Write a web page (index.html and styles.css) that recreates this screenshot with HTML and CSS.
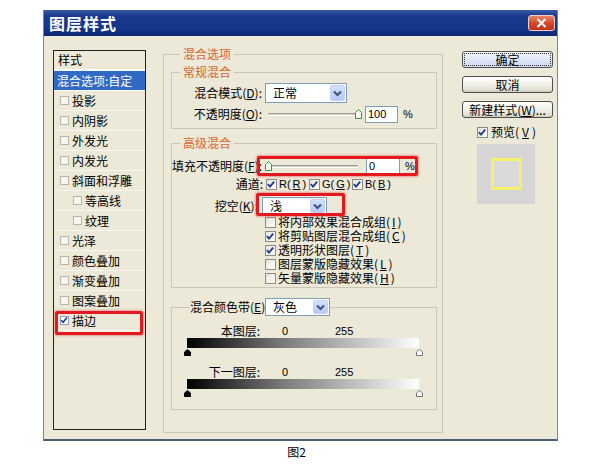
FILE: index.html
```html
<!DOCTYPE html>
<html lang="zh">
<head>
<meta charset="utf-8">
<title>图层样式</title>
<link rel="stylesheet" href="styles.css">
</head>
<body>
<div class="dialog">
  <div class="titlebar">
    <span class="title">图层样式</span>
    <span class="close"><svg width="11" height="10" viewBox="0 0 11 10"><path d="M1.5 1 L9.5 9 M9.5 1 L1.5 9" stroke="#fff" stroke-width="2" fill="none"/></svg></span>
  </div>
  <div class="content">
    <div class="styles">
      <div class="st-row st-head">样式</div>
      <div class="st-row sel">混合选项:自定</div>
      <div class="st-row"><i class="cbs"></i>投影</div>
      <div class="st-row"><i class="cbs"></i>内阴影</div>
      <div class="st-row"><i class="cbs"></i>外发光</div>
      <div class="st-row"><i class="cbs"></i>内发光</div>
      <div class="st-row"><i class="cbs"></i>斜面和浮雕</div>
      <div class="st-row sub"><i class="cbs"></i>等高线</div>
      <div class="st-row sub"><i class="cbs"></i>纹理</div>
      <div class="st-row"><i class="cbs"></i>光泽</div>
      <div class="st-row"><i class="cbs"></i>颜色叠加</div>
      <div class="st-row"><i class="cbs"></i>渐变叠加</div>
      <div class="st-row"><i class="cbs"></i>图案叠加</div>
      <div class="st-row"><i class="cbs on"><svg width="9" height="9" viewBox="0 0 9 9"><path d="M1.3 4.2 L3.5 6.6 L7.8 1.2" stroke="#1e3a8c" stroke-width="1.8" fill="none"/></svg></i>描边<span class="redbox rb-stroke"></span></div>
    </div>

    <div class="middle">
      <fieldset class="grp outer">
        <legend>混合选项</legend>
        <fieldset class="grp gen">
          <legend>常规混合</legend>
          <div class="row r-mode">
            <span class="lbl">混合模式(<u>D</u>):</span>
            <div class="select s-mode"><span>正常</span><span class="dd"><svg width="9" height="7" viewBox="0 0 9 7"><path d="M1 1.5 L4.5 5 L8 1.5" stroke="#3c5180" stroke-width="2" fill="none"/></svg></span></div>
          </div>
          <div class="row r-op">
            <span class="lbl">不透明度(<u>O</u>):</span>
            <div class="slider sl-op"><span class="track"></span><svg class="thumb" width="7" height="10" viewBox="0 0 7 10"><path d="M0.5 3.5 L3.5 0.5 L6.5 3.5 L6.5 9.5 L0.5 9.5 Z" fill="#f3fbee" stroke="#3b9a3b"/></svg></div>
            <div class="num n-op">100</div>
            <span class="pct">%</span>
          </div>
        </fieldset>

        <fieldset class="grp adv">
          <legend>高级混合</legend>
          <div class="row r-fill">
            <span class="lbl">填充不透明度(<u>F</u>):</span>
            <div class="slider sl-fill"><svg class="thumb" width="7" height="10" viewBox="0 0 7 10"><path d="M0.5 3.5 L3.5 0.5 L6.5 3.5 L6.5 9.5 L0.5 9.5 Z" fill="#f3fbee" stroke="#3b9a3b"/></svg><span class="track"></span></div>
            <div class="num n-fill">0</div>
            <span class="pct">%</span>
            <span class="redbox rb-fill"></span>
          </div>
          <div class="row r-ch">
            <span class="lbl l-ch">通道:</span>
            <span class="ch"><i class="cb"><svg width="11" height="11" viewBox="0 0 11 11"><path d="M2 5.2 L4.4 7.8 L9 2.4" stroke="#1e3a8c" stroke-width="2" fill="none"/></svg></i>R(<u>R</u>)</span>
            <span class="ch"><i class="cb"><svg width="11" height="11" viewBox="0 0 11 11"><path d="M2 5.2 L4.4 7.8 L9 2.4" stroke="#1e3a8c" stroke-width="2" fill="none"/></svg></i>G(<u>G</u>)</span>
            <span class="ch"><i class="cb"><svg width="11" height="11" viewBox="0 0 11 11"><path d="M2 5.2 L4.4 7.8 L9 2.4" stroke="#1e3a8c" stroke-width="2" fill="none"/></svg></i>B(<u>B</u>)</span>
          </div>
          <div class="row r-ko">
            <span class="lbl l-ko">挖空(<u>K</u>):</span>
            <div class="select s-ko"><span>浅</span><span class="dd"><svg width="9" height="7" viewBox="0 0 9 7"><path d="M1 1.5 L4.5 5 L8 1.5" stroke="#3c5180" stroke-width="2" fill="none"/></svg></span></div>
            <span class="redbox rb-ko"></span>
          </div>
          <div class="cks">
            <div class="ck-row"><i class="cb"></i>将内部效果混合成组(<u>I</u>)</div>
            <div class="ck-row"><i class="cb"><svg width="11" height="11" viewBox="0 0 11 11"><path d="M2 5.2 L4.4 7.8 L9 2.4" stroke="#1e3a8c" stroke-width="2" fill="none"/></svg></i>将剪贴图层混合成组(<u>C</u>)</div>
            <div class="ck-row"><i class="cb"><svg width="11" height="11" viewBox="0 0 11 11"><path d="M2 5.2 L4.4 7.8 L9 2.4" stroke="#1e3a8c" stroke-width="2" fill="none"/></svg></i>透明形状图层(<u>T</u>)</div>
            <div class="ck-row"><i class="cb"></i>图层蒙版隐藏效果(<u>L</u>)</div>
            <div class="ck-row"><i class="cb"></i>矢量蒙版隐藏效果(<u>H</u>)</div>
          </div>
        </fieldset>

        <fieldset class="grp band">
          <legend class="band-legend">
            <span class="band-lbl">混合颜色带(<u>E</u>):</span>
            <div class="select s-band"><span>灰色</span><span class="dd"><svg width="9" height="7" viewBox="0 0 9 7"><path d="M1 1.5 L4.5 5 L8 1.5" stroke="#3c5180" stroke-width="2" fill="none"/></svg></span></div>
          </legend>
          <div class="b-row">
            <span class="b-lbl">本图层:</span><span class="num b-v0">0</span><span class="num">255</span>
          </div>
          <div class="grad"></div>
          <div class="thumbs">
            <svg width="7" height="7" viewBox="0 0 7 7"><path d="M0.5 3 L3.5 0.5 L6.5 3 L6.5 6.5 L0.5 6.5 Z" fill="#000" stroke="#000"/></svg>
            <svg width="7" height="7" viewBox="0 0 7 7"><path d="M0.5 3 L3.5 0.5 L6.5 3 L6.5 6.5 L0.5 6.5 Z" fill="#fff" stroke="#777"/></svg>
          </div>
          <div class="b-row">
            <span class="b-lbl">下一图层:</span><span class="num b-v0">0</span><span class="num">255</span>
          </div>
          <div class="grad"></div>
          <div class="thumbs">
            <svg width="7" height="7" viewBox="0 0 7 7"><path d="M0.5 3 L3.5 0.5 L6.5 3 L6.5 6.5 L0.5 6.5 Z" fill="#000" stroke="#000"/></svg>
            <svg width="7" height="7" viewBox="0 0 7 7"><path d="M0.5 3 L3.5 0.5 L6.5 3 L6.5 6.5 L0.5 6.5 Z" fill="#fff" stroke="#777"/></svg>
          </div>
        </fieldset>
      </fieldset>
    </div>

    <div class="right">
      <div class="btn def">确定</div>
      <div class="btn">取消</div>
      <div class="btn">新建样式(<u>W</u>)...</div>
      <div class="pv"><i class="cb"><svg width="11" height="11" viewBox="0 0 11 11"><path d="M2 5.2 L4.4 7.8 L9 2.4" stroke="#1e3a8c" stroke-width="2" fill="none"/></svg></i>预览(<u>V</u>)</div>
      <div class="prev-box"><div class="prev-sq"></div></div>
    </div>
  </div>
</div>
<div class="caption">图2</div>
</body>
</html>
```

FILE: styles.css
```css
body {
  margin: 0;
  background: #fff;
  font-family: "Noto Sans CJK SC", "Liberation Sans", sans-serif;
  font-size: 12px;
  line-height: 14px;
  color: #000;
}

.dialog {
  margin: 10px 0 0 43px;
  width: 515px;
  height: 431px;
  box-sizing: border-box;
  background: #ece9d8;
  border: 1px solid #7c8596;
  border-top: none;
  border-bottom: 2px solid #4e5d78;
  display: flex;
  flex-direction: column;
}

.titlebar {
  height: 26px;
  flex: none;
  display: flex;
  align-items: center;
  justify-content: space-between;
  padding: 0 2px 0 5px;
  background: linear-gradient(#3b5aa6, #1a3a8e 22%, #15358b 70%, #0c2872);
}

.title {
  color: #fff;
  font-weight: bold;
  font-size: 16px;
  line-height: 20px;
  letter-spacing: 1px;
}

.close {
  width: 27px;
  height: 16px;
  box-sizing: border-box;
  border: 1px solid #f1cfc2;
  border-radius: 3px;
  background: linear-gradient(#eb8466, #d2462a 55%, #c0321a);
  display: flex;
  align-items: center;
  justify-content: center;
}

.content {
  flex: 1;
  display: flex;
  padding: 10px 0 0 9px;
  box-sizing: border-box;
}

/* left style list */
.styles {
  flex: none;
  width: 93px;
  height: 380px;
  margin-top: 4px;
  box-sizing: border-box;
  border: 1px solid #222;
  background: #ece9d8;
}

.st-row {
  position: relative;
  height: 20px;
  box-sizing: border-box;
  border-bottom: 1px solid #f7f6ef;
  display: flex;
  align-items: center;
  gap: 3px;
  padding-left: 6px;
  white-space: nowrap;
}

.st-head {
  padding-left: 4px;
  border-bottom: 2px solid #fff;
}

.st-row.sel {
  background: #316ac5;
  color: #fff;
  padding-left: 3px;
  border-bottom: 1px solid #fff;
}

.st-row.sub {
  padding-left: 19px;
}

.cbs {
  width: 9px;
  height: 9px;
  box-sizing: border-box;
  border: 1px solid #b8b6ac;
  background: #f7f6f1;
  flex: none;
  display: flex;
}

.cbs.on {
  border-color: #8f9cb8;
  background: #fff;
}

.cbs svg {
  margin: -1px 0 0 -1px;
}

.redbox {
  position: absolute;
  box-sizing: border-box;
  border: 3px solid #e3191f;
  border-radius: 2px;
  box-shadow: 0 0 2px 1px rgba(230, 60, 60, 0.45);
  pointer-events: none;
}

.rb-stroke {
  left: 1px;
  top: 0;
  width: 88px;
  height: 24px;
}

.rb-fill {
  left: 85px;
  top: 0;
  width: 161px;
  height: 20px;
}

.rb-ko {
  left: 84px;
  top: -4px;
  width: 89px;
  height: 23px;
}

/* middle */
.middle {
  flex: none;
  width: 280px;
  margin-left: 17px;
}

fieldset.grp {
  margin: 0;
  padding: 0;
  min-width: 0;
  border: 1px solid #c9c6b6;
}

legend {
  padding: 0 3px;
  margin-left: 8px;
  color: #d9652b;
  line-height: 16px;
}

.outer {
  padding: 2px 5px 22px 7px !important;
}

.outer > legend {
  margin-left: 9px;
}

.gen {
  padding-bottom: 6px !important;
}

.adv {
  margin-top: 6px !important;
  padding-bottom: 2px !important;
}

.band {
  margin-top: 10px !important;
  padding-bottom: 11px !important;
}

.row {
  position: relative;
  display: flex;
  align-items: center;
  white-space: nowrap;
}

.lbl {
  flex: none;
  width: 90px;
  text-align: right;
}

.r-mode {
  height: 20px;
  margin-top: 3px;
}

.r-op {
  height: 16px;
  margin-top: 3px;
}

.r-fill {
  height: 20px;
  margin-top: 5px;
}

.r-ch {
  height: 14px;
  margin-top: 1px;
}

.r-ko {
  height: 18px;
  margin-top: 6px;
}

.select {
  flex: none;
  box-sizing: border-box;
  border: 1px solid #7f9db9;
  background: #fff;
  display: flex;
  align-items: center;
  justify-content: space-between;
  padding: 0 1px 0 7px;
  margin-left: 3px;
}

.s-mode {
  width: 82px;
  height: 20px;
}

.s-ko {
  width: 65px;
  height: 18px;
  margin-left: 4px;
}

.s-band {
  width: 65px;
  height: 18px;
  margin-left: 3px;
}

.dd {
  width: 15px;
  height: calc(100% - 2px);
  box-sizing: border-box;
  border: 1px solid #c3d3f6;
  border-radius: 2px;
  background: linear-gradient(#d3e0fb, #b6caf5);
  display: flex;
  align-items: center;
  justify-content: center;
}

.slider {
  flex: none;
  position: relative;
  height: 10px;
  display: flex;
  align-items: center;
}

.track {
  display: block;
  width: 90px;
  height: 3px;
  box-sizing: border-box;
  border-top: 1px solid #9d9b90;
  border-bottom: 1px solid #fff;
  background: #d7d4c6;
  border-radius: 1px;
}

.sl-op {
  width: 96px;
  margin-left: 6px;
}

.sl-op .thumb {
  margin-left: -3px;
}

.sl-fill {
  width: 98px;
  margin-left: 3px;
}

.sl-fill .thumb {
  margin-right: -4px;
  position: relative;
  z-index: 1;
}

.num {
  font-family: "Liberation Sans", "DejaVu Sans", sans-serif;
  font-size: 11px;
}

.n-op,
.n-fill {
  box-sizing: border-box;
  height: 17px;
  border: 1px solid #7f9db9;
  background: #fff;
  padding-left: 2px;
  display: flex;
  align-items: center;
}

.n-op {
  width: 33px;
  margin-left: 1px;
}

.n-fill {
  width: 34px;
  margin-left: 3px;
}

.pct {
  margin-left: 5px;
  font-family: "Liberation Sans", sans-serif;
  font-size: 11px;
}

.l-ch {
  width: 91px;
}

.ch {
  display: flex;
  align-items: center;
  gap: 2px;
  margin-left: 3px;
  width: 41px;
  font-family: "Liberation Sans", sans-serif;
  font-size: 11px;
  line-height: 14px;
}

.ch + .ch {
  margin-left: 2px;
}

.l-ko {
  width: 86px;
}

.cb {
  flex: none;
  width: 11px;
  height: 11px;
  box-sizing: border-box;
  border: 1px solid #8c8c86;
  background: linear-gradient(135deg, #e4e2da, #fff);
  display: flex;
}

.cb svg {
  margin: -1px 0 0 -1px;
}

.cks {
  padding-left: 93px;
}

.ck-row {
  height: 14px;
  line-height: 14px;
  display: flex;
  align-items: center;
  gap: 2px;
  white-space: nowrap;
  overflow: visible;
}

.band-legend {
  display: flex;
  align-items: center;
  margin-left: 18px;
  padding: 0;
  color: #000;
  line-height: 18px;
}

.band-lbl {
  width: 72px;
  white-space: nowrap;
}

.b-row {
  height: 14px;
  margin-top: 8px;
  display: flex;
  align-items: center;
}

.b-lbl {
  width: 88px;
  text-align: right;
}

.b-v0 {
  margin-left: 22px;
  width: 53px;
}

.grad {
  margin-left: 15px;
  width: 232px;
  height: 10px;
  background: linear-gradient(to right, #000, #777 40%, #fff);
}

.thumbs {
  margin: 1px 0 0 12px;
  width: 239px;
  height: 8px;
  display: flex;
  justify-content: space-between;
}

/* right column */
.right {
  flex: none;
  width: 91px;
  margin: 5px 0 0 19px;
}

.btn {
  height: 17px;
  box-sizing: border-box;
  border: 1px solid #4f4f4f;
  border-radius: 3px;
  background: linear-gradient(#ffffff, #f3f2ec 45%, #e3e0d3 85%, #cdc9b9);
  display: flex;
  align-items: center;
  justify-content: center;
  margin-bottom: 8px;
  line-height: 1;
  white-space: nowrap;
}

.btn.def {
  background: linear-gradient(#f4f7fe, #e1e8f9 50%, #cbd6f2);
  outline: 1px dotted #333;
  outline-offset: -3px;
}

.pv {
  height: 14px;
  margin-top: -1px;
  padding-left: 15px;
  display: flex;
  align-items: center;
  gap: 3px;
}

.prev-box {
  margin: 5px 0 0 15px;
  width: 58px;
  height: 60px;
  background: #d5d5d5;
  display: flex;
  align-items: center;
  justify-content: center;
}

.prev-sq {
  width: 31px;
  height: 32px;
  box-sizing: border-box;
  border: 3px solid #f6f168;
  background: #dadada;
}

.caption {
  width: 593px;
  margin-top: 4px;
  text-align: center;
  font-size: 12px;
  line-height: 14px;
}
```
